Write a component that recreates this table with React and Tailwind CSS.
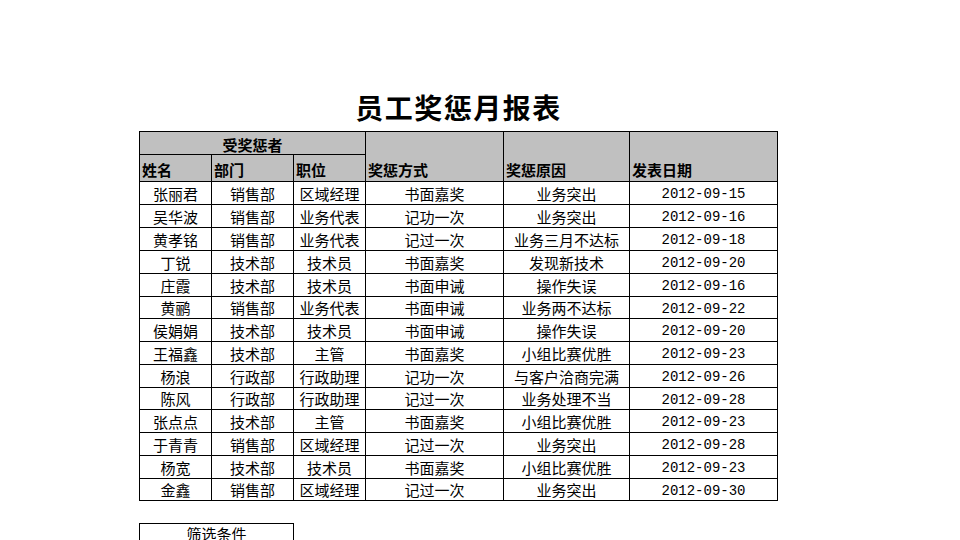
const ROWS = [
  ['张丽君', '销售部', '区域经理', '书面嘉奖', '业务突出', '2012-09-15'],
  ['吴华波', '销售部', '业务代表', '记功一次', '业务突出', '2012-09-16'],
  ['黄孝铭', '销售部', '业务代表', '记过一次', '业务三月不达标', '2012-09-18'],
  ['丁锐', '技术部', '技术员', '书面嘉奖', '发现新技术', '2012-09-20'],
  ['庄霞', '技术部', '技术员', '书面申诫', '操作失误', '2012-09-16'],
  ['黄鹂', '销售部', '业务代表', '书面申诫', '业务两不达标', '2012-09-22'],
  ['侯娟娟', '技术部', '技术员', '书面申诫', '操作失误', '2012-09-20'],
  ['王福鑫', '技术部', '主管', '书面嘉奖', '小组比赛优胜', '2012-09-23'],
  ['杨浪', '行政部', '行政助理', '记功一次', '与客户洽商完满', '2012-09-26'],
  ['陈风', '行政部', '行政助理', '记过一次', '业务处理不当', '2012-09-28'],
  ['张点点', '技术部', '主管', '书面嘉奖', '小组比赛优胜', '2012-09-23'],
  ['于青青', '销售部', '区域经理', '记过一次', '业务突出', '2012-09-28'],
  ['杨宽', '技术部', '技术员', '书面嘉奖', '小组比赛优胜', '2012-09-23'],
  ['金鑫', '销售部', '区域经理', '记过一次', '业务突出', '2012-09-30'],
];

// row heights incl. bottom border, measured off the sheet
const HEIGHTS = [23, 23, 23, 23, 23, 22, 23, 23, 23, 22, 23, 23, 23, 22];

const cjk = { fontFamily: '"Noto Sans CJK SC", sans-serif' };

function Cell({ children, className = '' }) {
  return (
    <div className={`flex items-center justify-center border-r border-b border-black text-[15px] leading-none text-black ${className}`}>
      {children}
    </div>
  );
}

export default function App() {
  return (
    <div className="h-[540px] w-[960px] overflow-hidden bg-white" style={cjk}>
      <div className="pl-[139px] pt-[93px]">
        <div className="flex h-[38px] w-[639px] items-start justify-center">
          <h1 className="text-[28px] font-bold leading-none tracking-[1.5px] text-black">员工奖惩月报表</h1>
        </div>

        <div className="grid w-[639px] grid-cols-[72px_82px_72px_138px_126px_148px] border-l border-t border-black">
          <div className="col-span-3 flex h-[23px] items-end justify-center border-r border-b border-black bg-[#c0c0c0] pb-[2px] text-[15px] font-bold leading-none">
            受奖惩者
          </div>
          <div className="row-span-2 flex items-end border-r border-b border-black bg-[#c0c0c0] pb-[4px] pl-[2px] text-[15px] font-bold leading-none">
            奖惩方式
          </div>
          <div className="row-span-2 flex items-end border-r border-b border-black bg-[#c0c0c0] pb-[4px] pl-[2px] text-[15px] font-bold leading-none">
            奖惩原因
          </div>
          <div className="row-span-2 flex items-end border-r border-b border-black bg-[#c0c0c0] pb-[4px] pl-[2px] text-[15px] font-bold leading-none">
            发表日期
          </div>
          {['姓名', '部门', '职位'].map((h) => (
            <div key={h} className="flex h-[27px] items-end border-r border-b border-black bg-[#c0c0c0] pb-[4px] pl-[2px] text-[15px] font-bold leading-none">
              {h}
            </div>
          ))}

          {ROWS.map((r, i) =>
            r.map((v, j) => (
              <Cell key={`${i}-${j}`} className={HEIGHTS[i] === 23 ? 'h-[23px]' : 'h-[22px]'}>
                {j === 5 ? (
                  <span className="pt-[2px] text-[14px]" style={{ fontFamily: '"Liberation Mono", monospace' }}>{v}</span>
                ) : (
                  v
                )}
              </Cell>
            ))
          )}
        </div>

        <div className="mt-[22px] flex h-[30px] w-[155px] items-start justify-center border border-black pt-[2px] text-[15px] leading-none">
          筛选条件
        </div>
      </div>
    </div>
  );
}
